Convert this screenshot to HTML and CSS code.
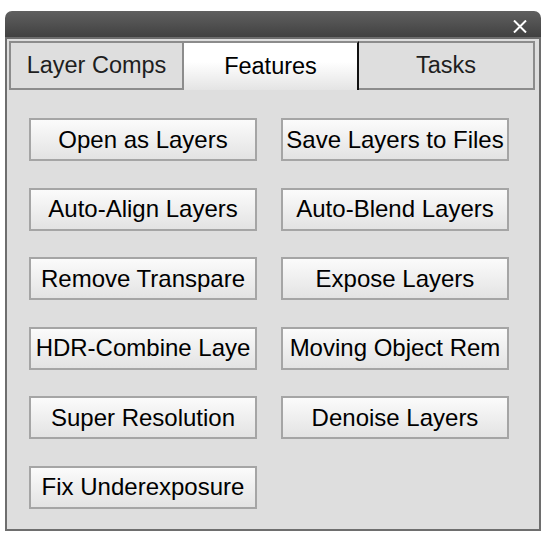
FILE: index.html
```html
<!DOCTYPE html>
<html lang="en">
<head>
    <meta charset="UTF-8">
    <meta name="viewport" content="width=device-width, initial-scale=1.0">
    <title>Features</title>
    <link rel="stylesheet" href="styles.css">
</head>
<body>
    <div class="window">
        <div class="titlebar">
            <svg class="close" width="14" height="13" viewBox="0 0 14 13">
                <path d="M1 0.5 L13 12.5 M13 0.5 L1 12.5" stroke="#fff" stroke-width="2" fill="none"/>
            </svg>
        </div>

        <div class="panel">
            <div class="tabs">
                <div class="tab">Layer Comps</div>
                <div class="tab active">Features</div>
                <div class="tab last">Tasks</div>
            </div>

            <div class="buttons">
                <button>Open as Layers</button>
                <button>Save Layers to Files</button>
                <button>Auto-Align Layers</button>
                <button>Auto-Blend Layers</button>
                <button>Remove Transpare</button>
                <button>Expose Layers</button>
                <button>HDR-Combine Laye</button>
                <button>Moving Object Rem</button>
                <button>Super Resolution</button>
                <button>Denoise Layers</button>
                <button>Fix Underexposure</button>
            </div>
        </div>
    </div>
</body>
</html>
```

FILE: styles.css
```css
body {
    margin: 0;
    background-color: #fff;
    font-family: 'Liberation Sans', Arial, sans-serif;
}

.window {
    margin: 11px 0 0 5px;
    width: 536px;
}

.titlebar {
    height: 26px;
    border-radius: 7px 7px 0 0;
    background: linear-gradient(#606060, #414141);
    display: flex;
    justify-content: flex-end;
    align-items: center;
    padding-right: 14px;
}

.titlebar .close {
    margin-top: 4px;
}

.panel {
    height: 488px;
    border: 2px solid #6e6e6e;
    background-color: #dedede;
    padding: 2px 4px 0 2px;
}

.tabs {
    display: flex;
    height: 49px;
}

.tab {
    width: 175px;
    box-sizing: border-box;
    border: 2px solid #8c8c8c;
    display: flex;
    align-items: center;
    justify-content: center;
    font-size: 23.5px;
    color: #1e1e1e;
    background-color: #dedede;
}

.tab.active {
    border-bottom: none;
    border-left: none;
    border-right: 2px solid #111;
    background: linear-gradient(#fff 40%, #e4e4e4);
    color: #000;
}

.tab.last {
    width: 176px;
    border-left: none;
}

.buttons {
    display: grid;
    grid-template-columns: 228px 228px;
    column-gap: 24px;
    row-gap: 26.6px;
    margin: 28px 0 0 20px;
}

button {
    height: 43px;
    border: 2px solid #a5a5a5;
    border-radius: 0;
    background: linear-gradient(#fbfbfb, #e3e3e3);
    font-family: 'Liberation Sans', Arial, sans-serif;
    font-size: 24px;
    color: #000;
    padding: 0 2px;
    white-space: nowrap;
    overflow: hidden;
}
```
